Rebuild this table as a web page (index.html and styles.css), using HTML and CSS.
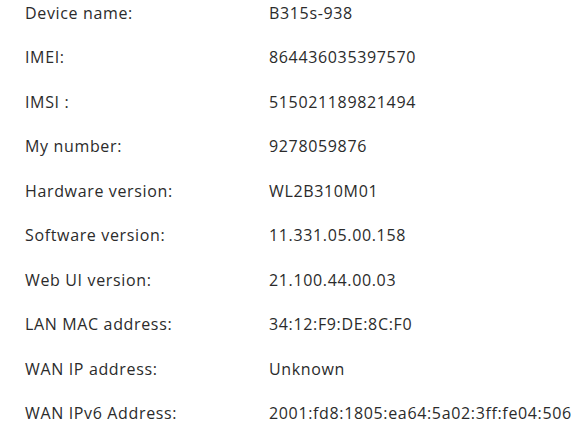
FILE: index.html
```html
<!DOCTYPE html>
<html>
<head>
<meta charset="utf-8">
<link rel="stylesheet" href="styles.css">
</head>
<body>
<div class="info">
  <div class="row"><span class="label">Device name:</span><span class="value">B315s-938</span></div>
  <div class="row"><span class="label">IMEI:</span><span class="value">864436035397570</span></div>
  <div class="row"><span class="label">IMSI :</span><span class="value">515021189821494</span></div>
  <div class="row"><span class="label">My number:</span><span class="value">9278059876</span></div>
  <div class="row"><span class="label">Hardware version:</span><span class="value">WL2B310M01</span></div>
  <div class="row"><span class="label">Software version:</span><span class="value">11.331.05.00.158</span></div>
  <div class="row"><span class="label">Web UI version:</span><span class="value">21.100.44.00.03</span></div>
  <div class="row"><span class="label">LAN MAC address:</span><span class="value">34:12:F9:DE:8C:F0</span></div>
  <div class="row"><span class="label">WAN IP address:</span><span class="value">Unknown</span></div>
  <div class="row"><span class="label">WAN IPv6 Address:</span><span class="value">2001:fd8:1805:ea64:5a02:3ff:fe04:506</span></div>
</div>
</body>
</html>
```
FILE: styles.css
```css
html, body {
  margin: 0;
  padding: 0;
  background: #ffffff;
}
body {
  font-family: "Open Sans", sans-serif;
  font-size: 16px;
  letter-spacing: 0.65px;
  color: #2b2b2b;
  overflow: hidden;
}
.info {
  display: flex;
  flex-direction: column;
  padding-top: 1px;
  padding-left: 25px;
}
.row {
  display: grid;
  grid-template-columns: 244px 1fr;
  height: 44.45px;
  line-height: 24px;
  white-space: nowrap;
}
```
